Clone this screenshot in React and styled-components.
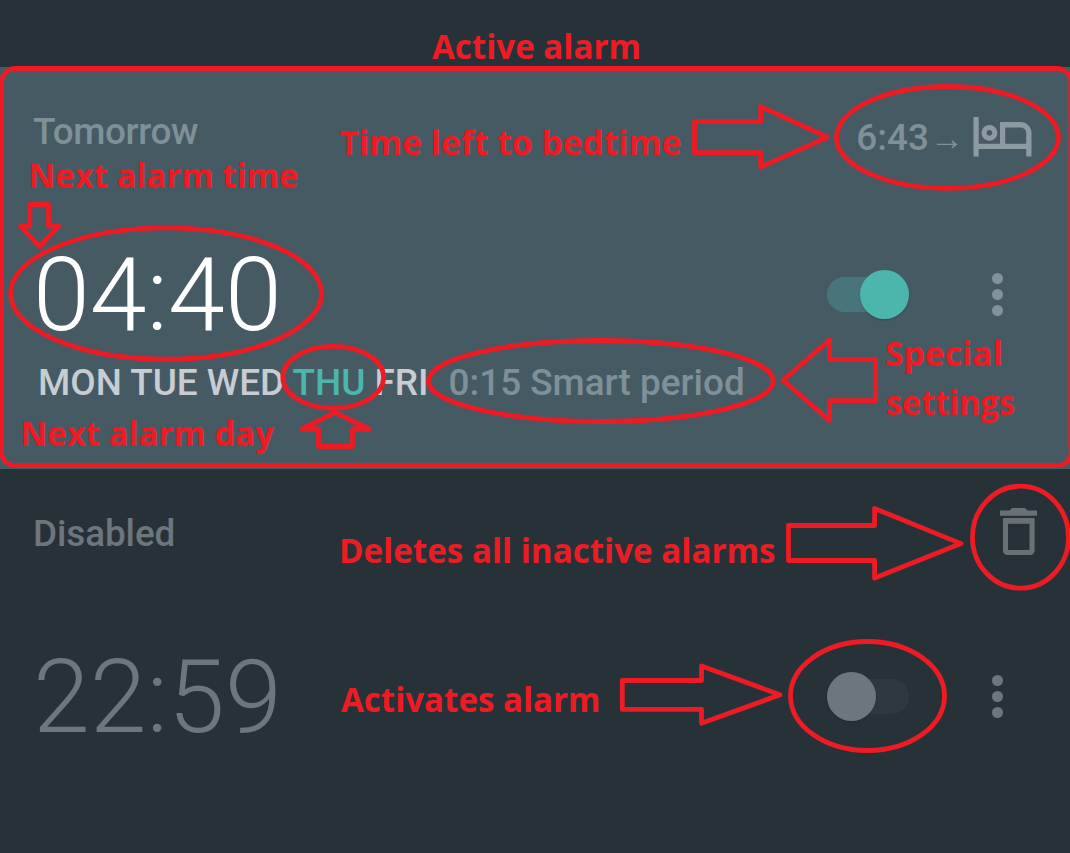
import React from "react";
import styled, { createGlobalStyle } from "styled-components";

const GlobalStyle = createGlobalStyle`
  body { margin: 0; background: #273238; }
  * { box-sizing: border-box; }
`;

const Screen = styled.main`
  position: relative;
  width: 1070px;
  height: 853px;
  padding-top: 67px;
  overflow: hidden;
  background: #273238;
  font-family: Roboto, "Liberation Sans", sans-serif;
`;

const AlarmCard = styled.section`
  height: ${(p) => (p.$active ? "402px" : "384px")};
  padding: 42px 33px 0;
  background: ${(p) => (p.$active ? "#465a64" : "transparent")};
  color: ${(p) => (p.$active ? "#809097" : "#6c767c")};
`;

const Row = styled.div`
  display: flex;
  justify-content: space-between;
  align-items: flex-start;
  height: 44px;
  font-size: 36.9px;
  font-weight: 500;
  line-height: 46px;
  white-space: pre;
`;

const Status = styled.span`
  letter-spacing: ${(p) => p.$tracking}px;
`;

const Bedtime = styled.div`
  display: flex;
  align-items: center;
  height: 44px;
  margin: 7px 5px 0 0;

  svg {
    margin-bottom: 2px;
  }
`;

const Arrow = styled.span`
  display: flex;
  justify-content: center;
  width: 22px;
  margin: 2px 15px 0 7px;
  font-family: "Liberation Serif", serif;
  font-size: 34px;
  font-weight: 400;
`;

const TimeRow = styled.div`
  display: flex;
  align-items: center;
  height: 120px;
  margin: ${(p) => (p.$offset)}px 0 5px;
`;

const Time = styled.div`
  flex: 1;
  color: ${(p) => (p.$active ? "#ffffff" : "#6c767d")};
  font-size: 102.4px;
  font-weight: 300;
  line-height: 120px;
`;

const Toggle = styled.div`
  display: flex;
  align-items: center;
  justify-content: ${(p) => (p.$on ? "flex-end" : "flex-start")};
  width: 82px;
  height: 35px;
  margin-bottom: 1px;
  border-radius: 18px;
  background: ${(p) => (p.$on ? "#48757a" : "#2e393f")};
`;

const Knob = styled.div`
  flex: none;
  width: 49px;
  height: 49px;
  border-radius: 50%;
  background: ${(p) => (p.$on ? "#4db6ac" : "#6c767d")};
  box-shadow: 0 1px 2px rgba(0, 0, 0, 0.2);
`;

const Menu = styled.div`
  display: flex;
  flex-direction: column;
  gap: 4.8px;
  margin: 0 34px 1px 83px;
`;

const Dot = styled.i`
  width: 11px;
  height: 11px;
  border-radius: 50%;
  background: ${(p) => (p.$active ? "#84929a" : "#6c767d")};
`;

const Days = styled(Row)`
  justify-content: flex-start;
  padding-left: 5px;
  color: #c7cdd1;
`;

const NextDay = styled.span`
  color: #4db6ac;
`;

const Smart = styled.span`
  margin-left: 20px;
  color: #809097;
`;

const Notes = styled.svg`
  position: absolute;
  inset: 0;
  fill: none;
  stroke: #ed1c24;
  stroke-width: 4.8;
  stroke-linejoin: round;
`;

const Callout = styled.text`
  fill: #ed1c24;
  stroke: none;
  font-family: "Open Sans", "Liberation Sans", sans-serif;
  font-size: 34.5px;
  font-weight: 700;
`;

const callouts = [
  ["Active alarm", 432, 59, 209],
  ["Time left to bedtime", 339.5, 155, 342],
  ["Next alarm time", 28.5, 188, 270],
  ["Next alarm day", 20.5, 446, 253.5],
  ["Special", 885, 366, 118],
  ["settings", 886, 415, 129],
  ["Deletes all inactive alarms", 339, 563, 436.5],
  ["Activates alarm", 341, 712, 259.5],
];

const ellipses = [
  [947.5, 137.4, 111, 50.9],
  [166, 293.5, 155.5, 65.7],
  [333.2, 377.3, 50.4, 31],
  [600.8, 381, 172.4, 40.5],
  [1020.5, 537.2, 48, 51],
  [867.5, 696, 77, 54.5],
];

const arrows = [
  "694.5,121.7 760.7,121.7 760.7,106.5 827.5,137.2 760.7,167 760.7,152.6 694.5,152.6",
  "29.8,204.5 48.5,204.5 48.5,226 58.8,226 39.6,246.5 20.5,226 29.8,226",
  "335,412.5 369,429 352.5,429 352.5,446.5 318.5,446.5 318.5,429 302,429",
  "783,380.3 829.5,340 829.5,359.3 875.5,359.3 875.5,400.7 829.5,400.7 829.5,420.5",
  "788.5,525.5 874.6,525.5 874.6,508.5 961,543.6 874.6,578 874.6,560.5 788.5,560.5",
  "622.3,680.5 701.5,680.5 701.5,666 780,694.8 701.5,723.3 701.5,709.3 622.3,709.3",
];

function BedIcon() {
  return (
    <svg width="59" height="40" viewBox="0 0 59 40" fill="#8d9aa1">
      <path d="M0.5 0h5.2v26.8h21.3V5h20.5a11 11 0 0 1 11 11v23.5h-5.3V32H5.7v7.5H0.5z M32.2 10.5v16.3h21V16a5.5 5.5 0 0 0-5.5-5.5z" fillRule="evenodd" />
      <path d="M16.4 8a7.9 7.9 0 1 0 .01 0z M16.4 13a2.9 2.9 0 1 1-.01 0z" fillRule="evenodd" />
    </svg>
  );
}

function TrashIcon() {
  return (
    <svg width="37" height="47" viewBox="0 0 37 47" fill="#697175">
      <path d="M0 2.5h9.5L12 0h13l2.5 2.5H37v5.3H0z" />
      <path d="M3 10h31.6v32.5a4.5 4.5 0 0 1-4.5 4.5H7.5A4.5 4.5 0 0 1 3 42.5z M8 15.7V42h21.5V15.7z" fillRule="evenodd" />
    </svg>
  );
}

const TrashButton = styled.div`
  display: flex;
  margin-top: -3px;
`;

function AlarmControls({ active }) {
  return (
    <>
      <Toggle $on={active}>
        <Knob $on={active} />
      </Toggle>
      <Menu>
        <Dot $active={active} />
        <Dot $active={active} />
        <Dot $active={active} />
      </Menu>
    </>
  );
}

export default function App() {
  return (
    <Screen>
      <GlobalStyle />
      <AlarmCard $active>
        <Row>
          <Status $tracking={-0.35}>Tomorrow</Status>
          <Bedtime>
            6:43<Arrow>→</Arrow>
            <BedIcon />
          </Bedtime>
        </Row>
        <TimeRow $offset={82}>
          <Time $active>04:40</Time>
          <AlarmControls active />
        </TimeRow>
        <Days>
          <span>MON TUE WED <NextDay>THU</NextDay> FRI</span>
          <Smart>0:15 Smart period</Smart>
        </Days>
      </AlarmCard>
      <AlarmCard>
        <Row>
          <Status $tracking={-0.1}>Disabled</Status>
          <TrashButton>
            <TrashIcon />
          </TrashButton>
        </Row>
        <TimeRow $offset={82}>
          <Time>22:59</Time>
          <AlarmControls />
        </TimeRow>
      </AlarmCard>
      <Notes width="1070" height="853" viewBox="0 0 1070 853">
        <rect x="1.5" y="68.5" width="1069.5" height="397.2" rx="14" />
        {ellipses.map(([cx, cy, rx, ry]) => (
          <ellipse key={cx} cx={cx} cy={cy} rx={rx} ry={ry} />
        ))}
        {arrows.map((points) => (
          <polygon key={points} points={points} />
        ))}
        {callouts.map(([text, x, y, length]) => (
          <Callout key={text} x={x} y={y} textLength={length} lengthAdjust="spacingAndGlyphs">
            {text}
          </Callout>
        ))}
      </Notes>
    </Screen>
  );
}
